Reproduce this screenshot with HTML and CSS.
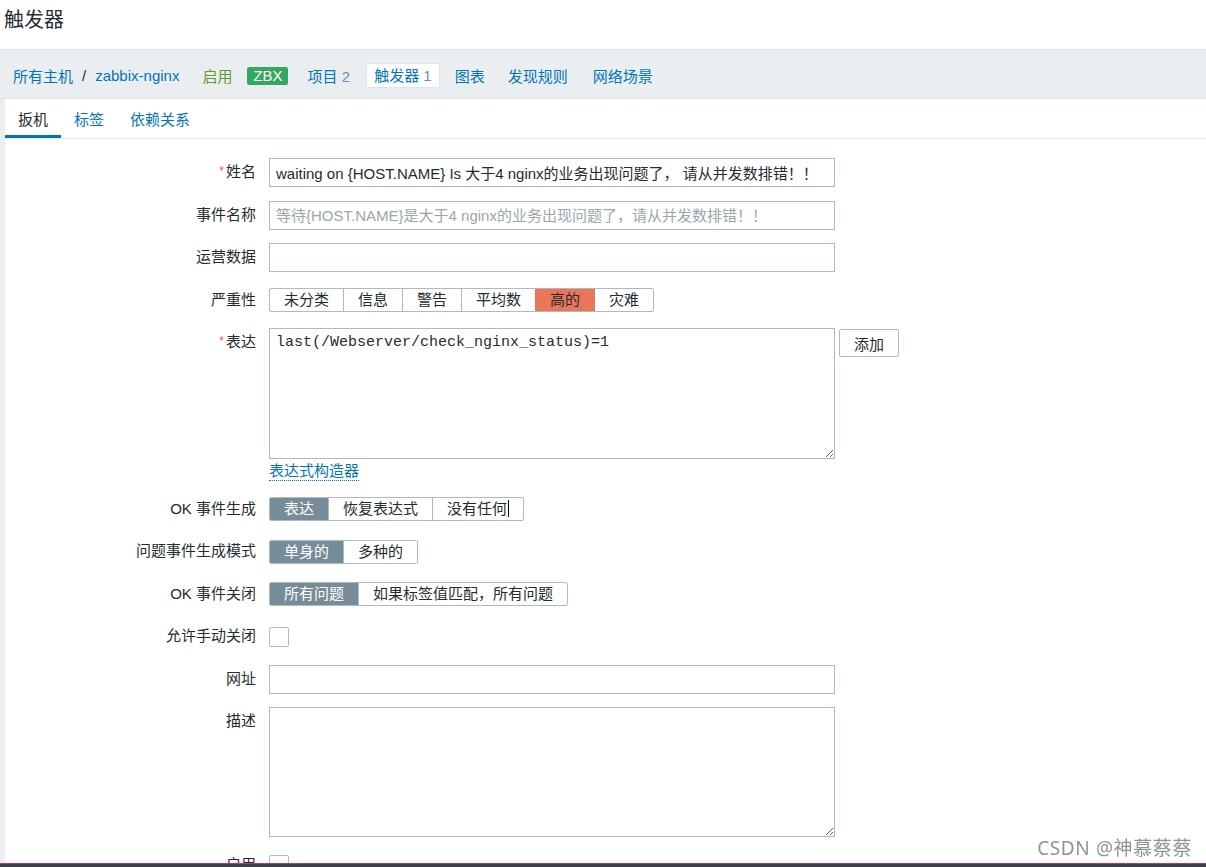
FILE: index.html
```html
<!DOCTYPE html>
<html lang="zh">
<head>
<meta charset="utf-8">
<title>触发器</title>
<link rel="stylesheet" href="styles.css">
</head>
<body>
<header class="page-header"><h1>触发器</h1></header>
<nav class="host-nav">
  <div class="crumbs"><a class="link">所有主机</a><span class="sep">/</span><a class="link">zabbix-nginx</a></div>
  <span class="status-on">启用</span>
  <span class="badge">ZBX</span>
  <a class="nav-item"><span class="link">项目</span> <span class="count">2</span></a>
  <a class="nav-item current"><span class="link">触发器</span> <span class="count">1</span></a>
  <a class="nav-item link">图表</a>
  <a class="nav-item link discovery">发现规则</a>
  <a class="nav-item link web">网络场景</a>
</nav>
<main class="content">
  <div class="tabs">
    <a class="tab active">扳机</a>
    <a class="tab">标签</a>
    <a class="tab">依赖关系</a>
  </div>
  <form class="form">
    <label class="lbl"><span class="req">*</span>姓名</label>
    <div class="ctl"><input class="text" type="text" value="waiting on {HOST.NAME} Is 大于4 nginx的业务出现问题了， 请从并发数排错！！"></div>

    <label class="lbl">事件名称</label>
    <div class="ctl"><input class="text" type="text" placeholder="等待{HOST.NAME}是大于4 nginx的业务出现问题了，请从并发数排错！！"></div>

    <label class="lbl">运营数据</label>
    <div class="ctl"><input class="text" type="text"></div>

    <label class="lbl">严重性</label>
    <div class="ctl">
      <div class="seg">
        <span class="opt">未分类</span><span class="opt">信息</span><span class="opt">警告</span><span class="opt">平均数</span><span class="opt high">高的</span><span class="opt">灾难</span>
      </div>
    </div>

    <label class="lbl"><span class="req">*</span>表达</label>
    <div class="ctl-col">
      <div class="expr-row">
        <textarea class="area expr">last(/Webserver/check_nginx_status)=1</textarea>
        <button type="button" class="btn">添加</button>
      </div>
      <a class="builder">表达式构造器</a>
    </div>

    <label class="lbl">OK 事件生成</label>
    <div class="ctl">
      <div class="seg">
        <span class="opt on">表达</span><span class="opt">恢复表达式</span><span class="opt">没有任何<span class="caret"></span></span>
      </div>
    </div>

    <label class="lbl">问题事件生成模式</label>
    <div class="ctl">
      <div class="seg"><span class="opt on">单身的</span><span class="opt">多种的</span></div>
    </div>

    <label class="lbl">OK 事件关闭</label>
    <div class="ctl">
      <div class="seg"><span class="opt on">所有问题</span><span class="opt">如果标签值匹配，所有问题</span></div>
    </div>

    <label class="lbl">允许手动关闭</label>
    <div class="ctl"><span class="check"></span></div>

    <label class="lbl">网址</label>
    <div class="ctl"><input class="text" type="text"></div>

    <label class="lbl">描述</label>
    <div class="ctl-col"><textarea class="area desc"></textarea></div>

    <label class="lbl">启用</label>
    <div class="ctl"><span class="check"></span></div>
  </form>
</main>
<div class="watermark">CSDN @神慕蔡蔡</div>
<div class="taskbar"></div>
</body>
</html>
```

FILE: styles.css
```css
* { box-sizing: border-box; }
body {
  margin: 0;
  background: #ebeef0;
  font-family: "Liberation Sans", Arial, "Noto Sans CJK SC", sans-serif;
  font-size: 15px;
  color: #1f2c33;
  overflow: hidden;
  height: 867px;
}
.page-header {
  background: #fff;
  height: 50px;
  border-bottom: 1px solid #dfe4e7;
  padding: 8px 0 0 4px;
}
.page-header h1 {
  margin: 0;
  font-size: 20px;
  font-weight: normal;
  line-height: 24px;
}
.link { color: #0275b8; text-decoration: none; }
.host-nav {
  height: 49px;
  display: flex;
  align-items: center;
  padding: 3px 0 0 13px;
  border-bottom: 1px solid #dfe4e7;
  gap: 20px;
  white-space: nowrap;
}
.crumbs { display: flex; align-items: center; }
.sep { color: #1f2c33; margin: 0 9px; }
.status-on { color: #5c9c32; margin-left: 3px; }
.badge {
  background: #34a862;
  color: #fff;
  border-radius: 2px;
  padding: 0 5px 0 6px;
  line-height: 18px;
  height: 18px;
  margin-left: -5px;
}
.count { color: #768d99; }
.nav-item { text-decoration: none; }
.nav-item.current {
  background: #fff;
  border: 1px solid #dfe4e7;
  border-radius: 2px;
  padding: 0 7px;
  height: 25px;
  line-height: 23px;
  margin: 0 -5px 0 -4px;
}
.nav-item.discovery { margin-left: 3px; }
.nav-item.web { margin-left: 5px; }
.content {
  margin-left: 5px;
  background: #fff;
  height: 900px;
}
.tabs {
  display: flex;
  border-bottom: 1px solid #e4e8eb;
}
.tab {
  padding: 5px 13px 0;
  line-height: 31px;
  border-bottom: 3px solid transparent;
  color: #0275b8;
}
.tab.active { color: #1f2c33; border-bottom-color: #0275b8; }
.form {
  display: grid;
  grid-template-columns: 251px 566px;
  column-gap: 13px;
  row-gap: 13.5px;
  padding-top: 19px;
}
.lbl {
  text-align: right;
  line-height: 18px;
  padding-top: 5px;
  white-space: nowrap;
}
.req {
  color: #e45959;
  font-size: 12px;
  vertical-align: top;
  margin-right: 2px;
  position: relative;
  top: -1px;
}
.ctl {
  min-height: 29px;
  display: flex;
  align-items: center;
}
.ctl-col { display: flex; flex-direction: column; align-items: flex-start; }
.text {
  width: 566px;
  height: 29px;
  border: 1px solid #acbbc2;
  padding: 0 6px;
  font: inherit;
  color: #1f2c33;
  outline: none;
  margin: 0;
}
.text::placeholder { color: #9aa7ad; }
.expr-row { display: flex; align-items: flex-start; width: 630px; }
.area {
  width: 566px;
  border: 1px solid #acbbc2;
  font-family: "Liberation Mono", "Courier New", monospace;
  font-size: 15px;
  line-height: 18px;
  padding: 5px 6px;
  color: #1f2c33;
  margin: 0;
  outline: none;
  flex-shrink: 0;
}
.expr { height: 131px; }
.desc { height: 130px; }
.btn {
  margin: 1px 0 0 4px;
  height: 28px;
  padding: 0 14px;
  background: #fff;
  border: 1px solid #acbbc2;
  border-radius: 2px;
  font: inherit;
  color: #1f2c33;
  white-space: nowrap;
}
.builder {
  color: #0275b8;
  border-bottom: 1px dotted #0275b8;
  line-height: 18px;
  margin-top: 3px;
}
.seg {
  display: inline-flex;
  border: 1px solid #acbbc2;
  border-radius: 2px;
  height: 24px;
  overflow: hidden;
  white-space: nowrap;
}
.opt {
  padding: 0 14px;
  line-height: 22px;
  border-left: 1px solid #acbbc2;
  position: relative;
}
.opt:first-child { border-left: none; }
.opt.high { background: #e97659; border-left-color: #e97659; }
.opt.high + .opt { border-left-color: #e97659; }
.opt.on { background: #768d99; color: #fff; }
.caret {
  display: inline-block;
  width: 1px;
  height: 17px;
  background: #000;
  vertical-align: -3px;
  margin-left: 1px;
}
.check {
  width: 20px;
  height: 20px;
  border: 1px solid #acbbc2;
  border-radius: 2px;
  background: #fff;
}
.watermark {
  position: fixed;
  right: 14px;
  bottom: 8px;
  font-family: "Noto Sans", "Noto Sans CJK SC", sans-serif;
  font-size: 19px;
  letter-spacing: 0.6px;
  line-height: 22px;
  color: rgba(110, 110, 110, 0.75);
}
.taskbar {
  position: fixed;
  left: 0;
  right: 0;
  bottom: 0;
  height: 4px;
  background: #3d4048;
  border-top: 1px solid #c2317f;
}
```
